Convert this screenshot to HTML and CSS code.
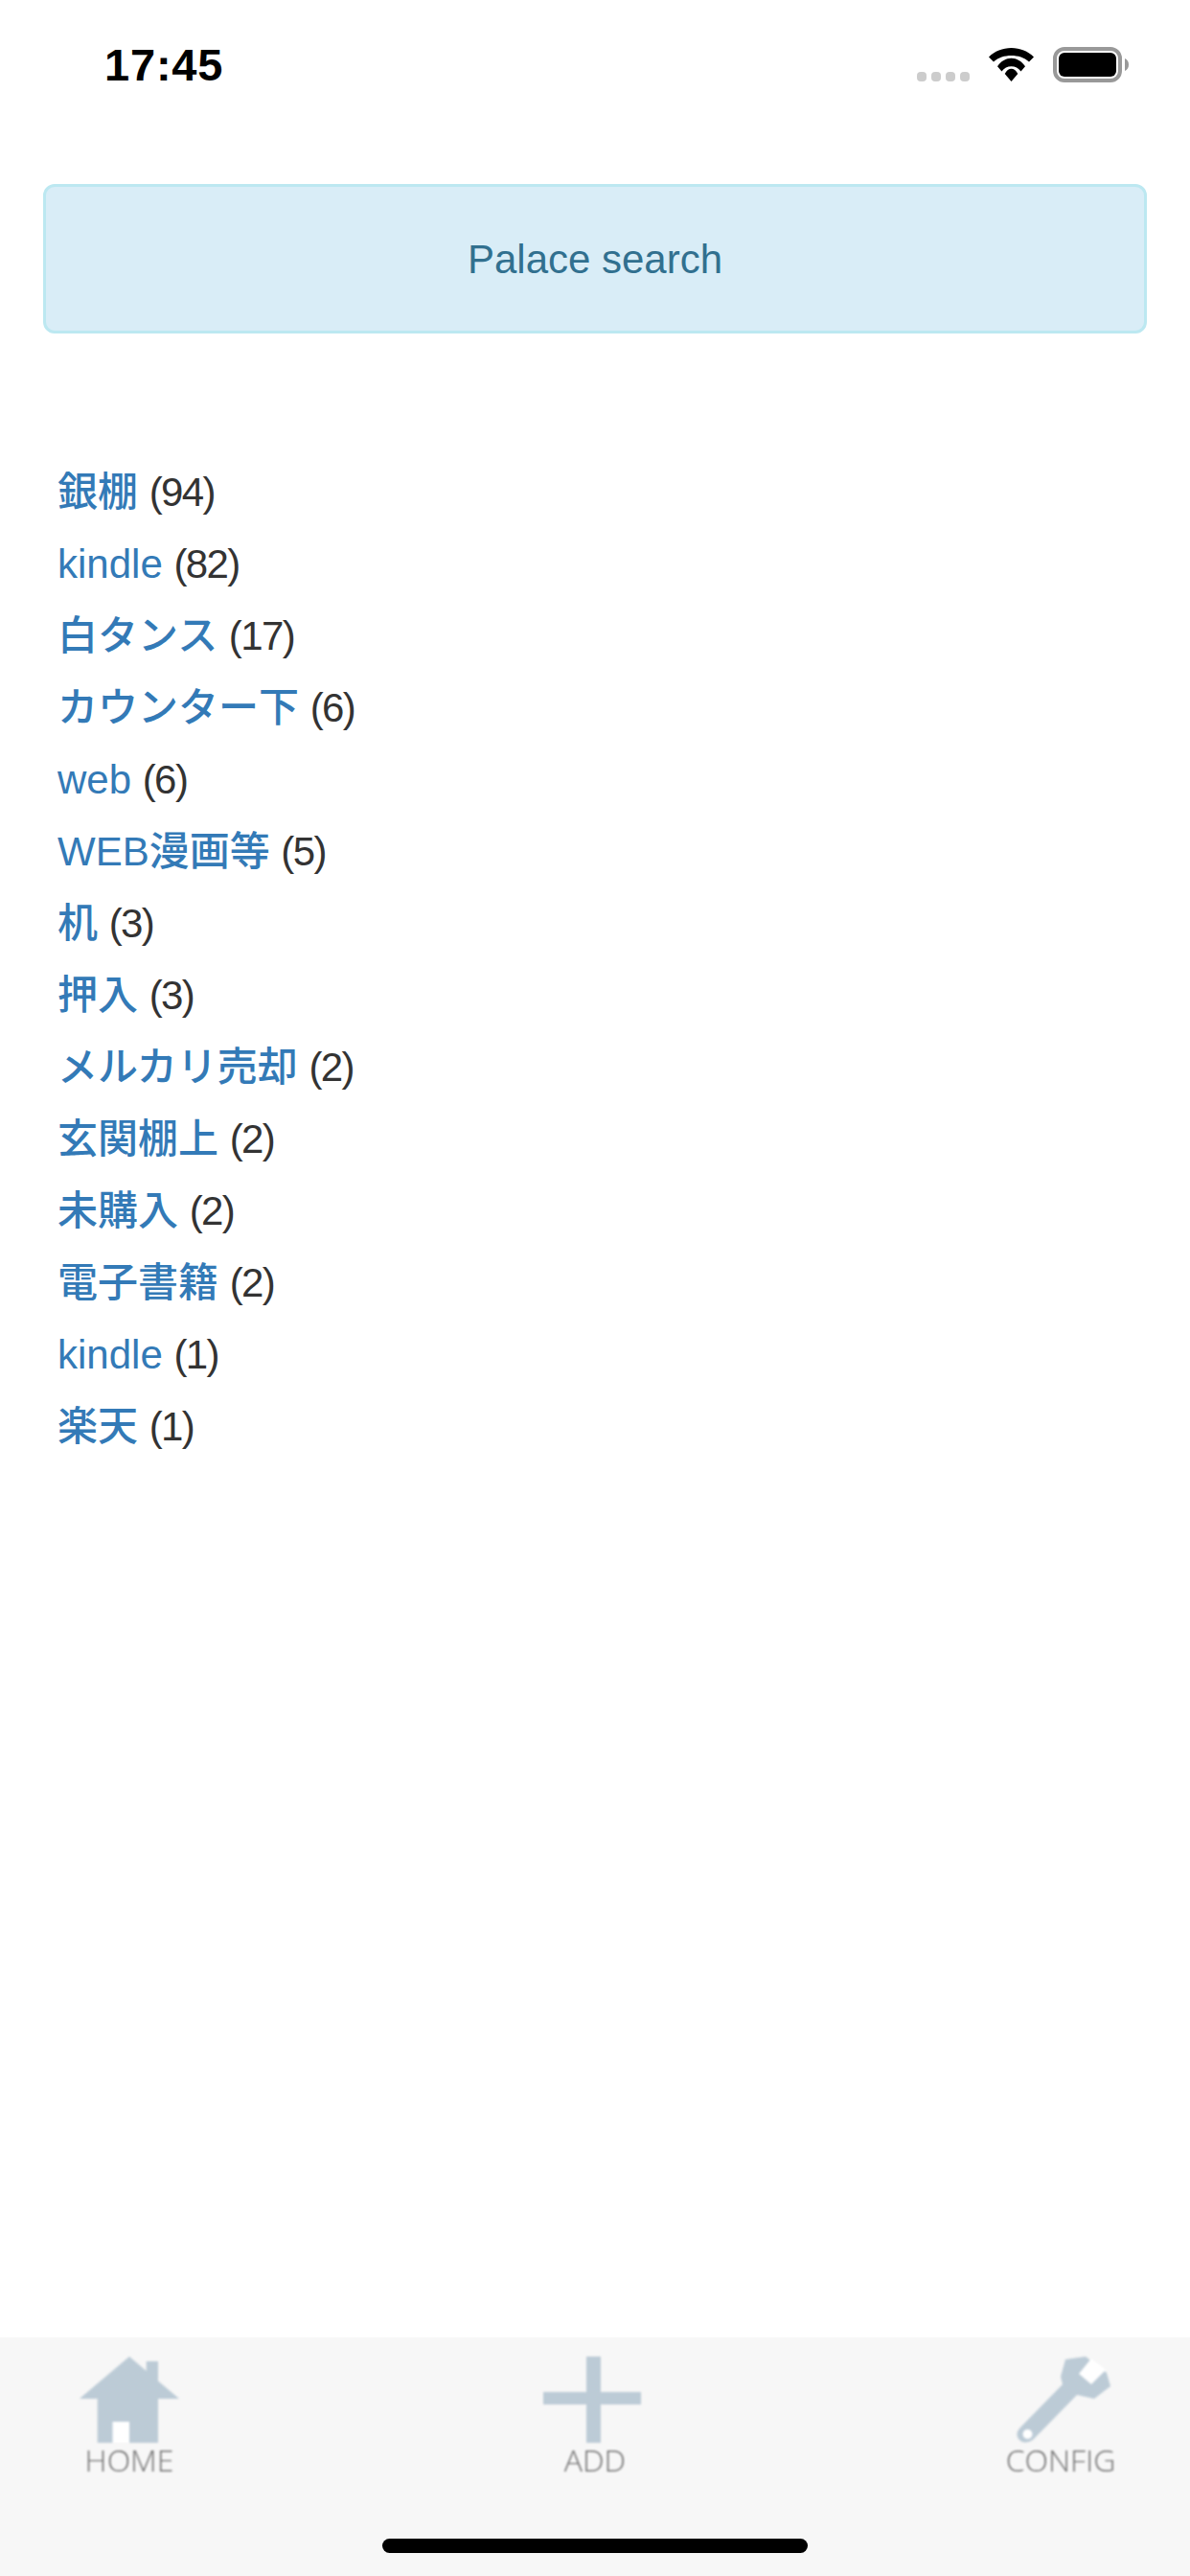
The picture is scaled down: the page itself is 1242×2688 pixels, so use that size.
FILE: index.html
```html
<!DOCTYPE html>
<html lang="ja">
<head>
<meta charset="utf-8">
<title>Palace search</title>
<link rel="stylesheet" href="styles.css">
</head>
<body>
<header class="status">
  <span class="time">17:45</span>
  <div class="status-icons">
    <div class="signal"><i></i><i></i><i></i><i></i></div>
    <svg class="wifi" width="47" height="35" viewBox="0 0 47 35"><path d="M0 9.500C6 3.500 14.500 0 23.500 0S41 3.500 47 9.500L42 14.500C37 10 30.500 8 23.500 8S10 10 5 14.500Z"/><path d="M9 19.300C13 13.500 18 10.700 23.500 10.700S34 13.500 38 19.300L33.500 24.500C31 21 27.500 19.300 23.500 19.300S16 21 13.500 24.500Z"/><path d="M16.700 27C18.500 23.500 21 21.700 23.500 21.700S28.500 23.500 30.300 27L23.500 35Z"/></svg>
    <svg class="battery" width="80" height="37" viewBox="0 0 80 37"><rect x="2" y="2" width="68" height="33" rx="10" fill="none" stroke="#999" stroke-width="4"/><rect x="6" y="6" width="60" height="25" rx="6" fill="#000"/><path d="M75 12C77.500 13 79 15.500 79 18.500S77.500 24 75 25Z" fill="#999"/></svg>
  </div>
</header>
<main class="content">
  <a class="search-btn" href="#">Palace search</a>
  <ul class="places">
    <li><a href="#">銀棚</a> <span class="count">(94)</span></li>
    <li><a href="#">kindle</a> <span class="count">(82)</span></li>
    <li><a href="#">白タンス</a> <span class="count">(17)</span></li>
    <li><a href="#">カウンター下</a> <span class="count">(6)</span></li>
    <li><a href="#">web</a> <span class="count">(6)</span></li>
    <li><a href="#">WEB漫画等</a> <span class="count">(5)</span></li>
    <li><a href="#">机</a> <span class="count">(3)</span></li>
    <li><a href="#">押入</a> <span class="count">(3)</span></li>
    <li><a href="#">メルカリ売却</a> <span class="count">(2)</span></li>
    <li><a href="#">玄関棚上</a> <span class="count">(2)</span></li>
    <li><a href="#">未購入</a> <span class="count">(2)</span></li>
    <li><a href="#">電子書籍</a> <span class="count">(2)</span></li>
    <li><a href="#">kindle</a> <span class="count">(1)</span></li>
    <li><a href="#">楽天</a> <span class="count">(1)</span></li>
  </ul>
</main>
<nav class="tabbar">
  <a class="tab" href="#">
    <svg class="tab-icon" width="180" height="90" viewBox="0 0 180 90"><path class="glyph" d="M90 0L107.700 15V5H120V25.400L142 44H120V90H56.700V44H38Z"/><rect class="cut" x="72.500" y="68" width="17.500" height="22"/></svg>
    <span class="tab-label">HOME</span>
  </a>
  <a class="tab" href="#">
    <svg class="tab-icon" width="180" height="90" viewBox="0 0 180 90"><path class="glyph" d="M81 0H96V37H138V50H96V90H81V50H36V37H81Z"/></svg>
    <span class="tab-label">ADD</span>
  </a>
  <a class="tab" href="#">
    <svg class="tab-icon" width="180" height="90" viewBox="0 0 180 90"><path class="glyph" d="M95 3L116 0L138 17L142 31L125 44L107 40L62 86C58 90 51 91 47 87C43 83 44 78 48 74L92 29L90 21Z"/><path class="cut" d="M122 2L137 14L122 29L109 18Z"/><circle class="cut" cx="55.500" cy="81" r="5"/></svg>
    <span class="tab-label">CONFIG</span>
  </a>
  <span class="home-indicator"></span>
</nav>
</body>
</html>
```
FILE: styles.css
```css
* { box-sizing: border-box; }
html, body { margin: 0; padding: 0; }
body {
  width: 1242px;
  height: 2688px;
  display: flex;
  flex-direction: column;
  background: #fff;
  color: #333;
  font-family: "Liberation Sans", "Noto Sans CJK JP", sans-serif;
  font-size: 42px;
  overflow: hidden;
}
a { text-decoration: none; }

.status {
  height: 108px;
  flex: none;
  display: flex;
  justify-content: space-between;
  align-items: flex-start;
  padding: 49px 63px 0 109px;
}
.time {
  font-size: 47px;
  line-height: 38px;
  font-weight: 700;
  color: #000;
  letter-spacing: 0.8px;
}
.status-icons { display: flex; align-items: flex-start; }
.signal { display: flex; gap: 5px; margin-top: 26px; }
.signal i { width: 10px; height: 10px; border-radius: 4px; background: #ccc; }
.wifi { margin-left: 20px; margin-top: 1px; }
.battery { margin-left: 20px; }

.content { flex: 1; padding: 84px 45px 0; }
.search-btn {
  display: flex;
  align-items: center;
  justify-content: center;
  height: 156px;
  padding-top: 2px;
  border: 3px solid #bce8f1;
  border-radius: 12px;
  background: #d9edf7;
  color: #31708f;
  font-size: 42px;
}
.places {
  list-style: none;
  margin: 128px 0 0;
  padding: 0 0 0 15px;
}
.places li { height: 75px; line-height: 75px; white-space: nowrap; }
.places a { color: #337ab7; font-weight: 500; }
.count { letter-spacing: -1.6px; }

.tabbar {
  position: relative;
  flex: none;
  height: 249px;
  padding: 20px 45px 0;
  display: flex;
  justify-content: space-between;
  align-items: flex-start;
  background: #f7f7f7;
}
.tab { width: 180px; display: flex; flex-direction: column; align-items: center; }
.tab-icon { display: block; filter: blur(0.8px); }
.glyph { fill: #bccbd6; }
.cut { fill: #fff; }
.tab-label {
  margin-top: 1px;
  font-family: "Open Sans", sans-serif;
  font-size: 32px;
  line-height: 34px;
  font-weight: 300;
  color: #707070;
  filter: blur(0.8px);
}
.home-indicator {
  position: absolute;
  left: 399px;
  top: 210px;
  width: 444px;
  height: 15px;
  border-radius: 8px;
  background: #000;
}
```
